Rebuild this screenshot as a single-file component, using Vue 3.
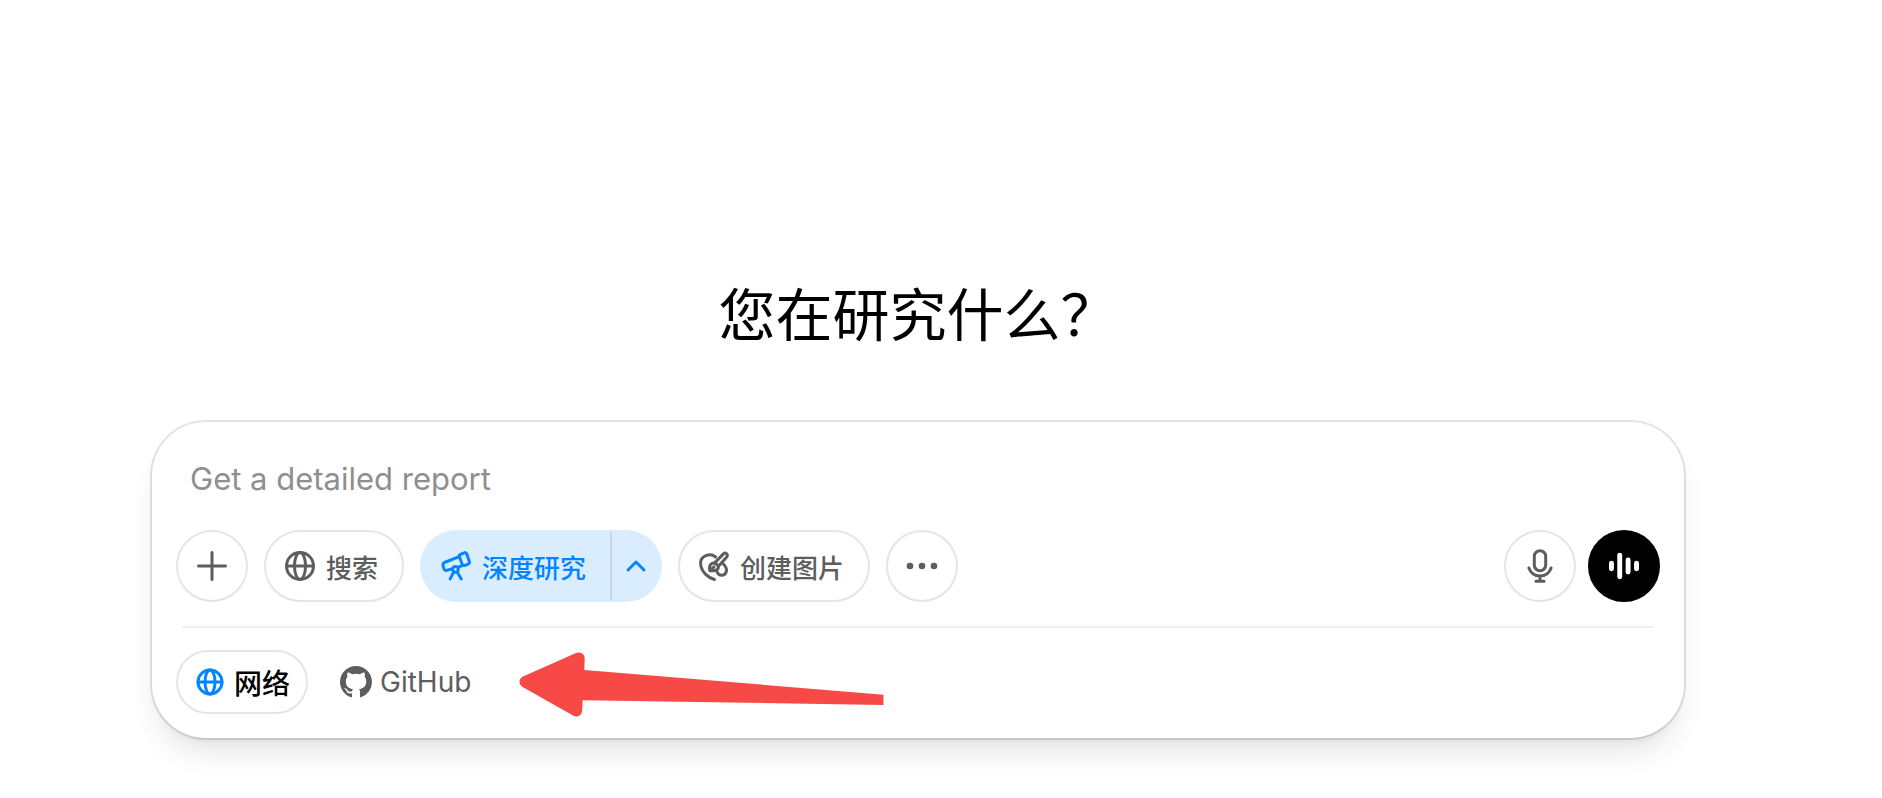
<!-- 深度研究输入框 -->
<template>
  <main class="research">
    <h1 class="title">您在研究什么？</h1>

    <form class="composer" @submit.prevent>
      <input
        v-model="prompt"
        type="text"
        class="prompt"
        placeholder="Get a detailed report"
        aria-label="Get a detailed report"
      />

      <div class="toolbar">
        <button type="button" class="btn round" aria-label="添加">
          <svg class="icon" viewBox="0 0 24 24">
            <path d="M12 3v18M3 12h18" />
          </svg>
        </button>

        <button type="button" class="btn tool">
          <svg class="icon" viewBox="0 0 24 24">
            <circle cx="12" cy="12" r="9" />
            <ellipse cx="12" cy="12" rx="3.7" ry="9" />
            <path d="M3 12h18" />
          </svg>
          <span>搜索</span>
        </button>

        <div class="split">
          <button type="button" class="split-main">
            <svg class="icon" viewBox="0 0 24 24">
              <path
                d="M14.6 4.4l2.8-1.2a1.3 1.3 0 0 1 1.8.8l1.7 5.1a1.3 1.3 0 0 1-.8 1.7l-2.3.8a1.3 1.3 0 0 1-1.7-.8l-1.8-4.9a1.2 1.2 0 0 1 .3-1.5z"
              />
              <path d="M14.2 5.8L4.6 9.5a2 2 0 0 0-1.2 2.600l.5 1.500a2 2 0 0 0 2.500 1.200l3.200-1.100M13.500 12.700l2.700-.9" />
              <circle cx="11.6" cy="14.3" r="1.9" />
              <path d="M10.4 16.1l-2.300 4.500M12.900 16.100l2.600 4.500" />
            </svg>
            <span>深度研究</span>
          </button>
          <button type="button" class="split-more" aria-label="展开来源" @click="showSources = !showSources">
            <svg class="icon-small" viewBox="0 0 24 24">
              <path d="M4 16l8-8 8 8" />
            </svg>
          </button>
        </div>

        <button type="button" class="btn tool">
          <svg class="icon" viewBox="0 0 24 24">
            <path d="M13.1 6C11.4 4.6 9 4.2 6.6 5.1 3.7 6.2 2.5 8.800 3.300 12.200c.9 4 4.500 7.500 9 8.800" />
            <path d="M18.1 10.5c1.9 1.800 2.800 4 1.800 6-1.200 2.400-4.600 2-5.700-.3" />
            <path d="M12.3 10.1l6-6.200a1.500 1.500 0 0 1 2.200 2.100l-5.700 6.400" />
            <path d="M9.2 15.2c-.3-1.500-.3-4.200 1.600-5 1.900-.7 4.200.8 4.100 2.800-.2 2.100-3.700 2.300-5.700 2.200zM9.400 15l2.600-2.500" />
          </svg>
          <span>创建图片</span>
        </button>

        <button type="button" class="btn round" aria-label="更多">
          <svg class="icon solid" viewBox="0 0 24 24">
            <circle cx="4" cy="12" r="2.2" />
            <circle cx="12" cy="12" r="2.2" />
            <circle cx="20" cy="12" r="2.2" />
          </svg>
        </button>

        <div class="voice">
          <button type="button" class="btn round" aria-label="听写">
            <svg class="icon" viewBox="0 0 24 24">
              <rect x="8.2" y="1.8" width="7.6" height="13.4" rx="3.8" />
              <path d="M4.6 13.3c1.200 3.400 4.100 5.300 7.400 5.300s6.200-1.900 7.400-5.300M12 18.600v3.400M9.300 22.100h5.400" />
            </svg>
          </button>
          <button type="button" class="btn round dark" aria-label="语音">
            <svg class="icon solid" viewBox="0 0 24 24">
              <rect x="2" y="8.5" width="3.3" height="7" rx="1.65" />
              <rect x="7.5" y="3.2" width="3.3" height="17.6" rx="1.65" />
              <rect x="13.1" y="6.4" width="3.3" height="11.2" rx="1.65" />
              <rect x="18.7" y="8.5" width="3.3" height="7" rx="1.65" />
            </svg>
          </button>
        </div>
      </div>

      <div v-if="showSources" class="sources">
        <button
          v-for="s in sources"
          :key="s.id"
          type="button"
          class="source"
          :class="{ active: s.id === current }"
          @click="current = s.id"
        >
          <svg v-if="s.id === 'web'" class="icon-web" viewBox="0 0 28 28">
            <circle cx="14" cy="14" r="12" />
            <ellipse cx="14" cy="14" rx="5" ry="12" />
            <path d="M2 14h24" />
          </svg>
          <svg v-else class="icon-github" viewBox="0 0 16 16">
            <path
              d="M8 0C3.58 0 0 3.58 0 8c0 3.54 2.29 6.53 5.47 7.59.4.07.55-.17.55-.38 0-.19-.01-.82-.01-1.49-2.01.37-2.53-.49-2.69-.94-.09-.23-.48-.94-.82-1.13-.28-.15-.68-.52-.01-.53.63-.01 1.08.58 1.23.82.72 1.21 1.87.87 2.33.66.07-.52.28-.87.51-1.07-1.78-.2-3.64-.89-3.64-3.95 0-.87.31-1.59.82-2.15-.08-.2-.36-1.02.08-2.12 0 0 .67-.21 2.2.82.64-.18 1.32-.27 2-.27s1.36.09 2 .27c1.53-1.04 2.2-.82 2.2-.82.44 1.1.16 1.92.08 2.12.51.56.82 1.27.82 2.15 0 3.07-1.87 3.75-3.65 3.95.29.25.54.73.54 1.48 0 1.07-.01 1.93-.01 2.2 0 .21.15.46.55.38A8.01 8.01 0 0 0 16 8c0-4.42-3.58-8-8-8z"
            />
          </svg>
          <span>{{ s.name }}</span>
        </button>

        <!-- 指向来源的箭头 -->
        <svg class="arrow" viewBox="0 0 364 64" aria-hidden="true">
          <path
            d="M4 26.600L57 3.100C61.500 1.400 65.800 4 65.700 9L65.300 20 364.500 44.700V55L63.700 50.200 63.100 60.500C62.900 66 58 67.800 54 65.500L4 37.300C-.700 34.500-.700 29 4 26.600z"
          />
        </svg>
      </div>
    </form>
  </main>
</template>

<script setup>
import { ref } from 'vue'

// 输入内容
const prompt = ref('')

// 来源栏是否展开
const showSources = ref(true)

// 可选来源
const sources = [
  { id: 'web', name: '网络' },
  { id: 'github', name: 'GitHub' },
]

const current = ref('web')
</script>

<style>
body {
  background: #fff;
}
</style>

<style scoped>
.research {
  padding: 280px 198px 60px 152px;
  font-family: Inter, 'Noto Sans CJK SC', sans-serif;
  color: #5d5d5d;
}

.title {
  margin: 0 0 70px;
  font-size: 57px;
  line-height: 72px;
  font-weight: 400;
  text-align: center;
  color: #000;
}

.composer {
  display: flex;
  flex-direction: column;
  padding: 24px;
  border-radius: 54px;
  background: #fff;
  box-shadow:
    0 0 0 2px rgba(0, 0, 0, 0.11),
    0 20px 30px -6px rgba(0, 0, 0, 0.1),
    0 8px 12px -8px rgba(0, 0, 0, 0.1);
}

.prompt {
  height: 64px;
  margin-bottom: 20px;
  padding: 0 14px;
  border: none;
  outline: none;
  background: none;
  font-family: inherit;
  font-size: 31px;
  color: #0d0d0d;
}

.prompt::placeholder {
  color: #8f8f8f;
  opacity: 1;
}

button {
  font-family: inherit;
  color: inherit;
  cursor: pointer;
}

svg {
  flex: none;
  fill: none;
  stroke: currentColor;
  stroke-width: 2;
  stroke-linecap: round;
  stroke-linejoin: round;
}

.toolbar {
  display: flex;
  gap: 16px;
}

.btn {
  display: flex;
  align-items: center;
  justify-content: center;
  box-sizing: border-box;
  height: 72px;
  border: 2px solid #e5e5e5;
  border-radius: 36px;
  background: #fff;
}

.round {
  width: 72px;
  padding: 0;
}

.tool {
  gap: 8px;
  padding: 0 24px 0 16px;
  font-size: 26px;
  font-weight: 500;
}

.dark {
  border-color: #000;
  background: #000;
  color: #fff;
}

.icon {
  width: 36px;
  height: 36px;
}

.solid {
  fill: currentColor;
  stroke: none;
}

.split {
  display: flex;
  align-items: center;
  height: 72px;
  border-radius: 36px;
  background: #daedff;
  color: #0285ff;
}

.split button {
  display: flex;
  align-items: center;
  height: 68px;
  border: none;
  background: none;
}

.split .split-main {
  gap: 8px;
  padding: 0 24px 0 18px;
  border-right: 2px solid #c4d5e6;
  font-size: 26px;
  font-weight: 500;
}

.split .split-more {
  padding: 0 14px 0 12px;
}

.icon-small {
  width: 24px;
  height: 24px;
  stroke-width: 3;
}

.voice {
  display: flex;
  gap: 12px;
  margin-left: auto;
}

.sources {
  display: flex;
  gap: 16px;
  position: relative;
  margin-top: 24px;
  padding-top: 24px;
}

.sources::before {
  content: '';
  position: absolute;
  top: 0;
  left: 6px;
  right: 6px;
  height: 2px;
  background: #f0f0f0;
}

.source {
  display: flex;
  align-items: center;
  gap: 8px;
  box-sizing: border-box;
  height: 64px;
  padding: 0 14px;
  border: 2px solid transparent;
  border-radius: 32px;
  background: #fff;
  font-size: 28px;
}

.source.active {
  gap: 10px;
  padding: 0 16px 0 18px;
  border-color: #e5e5e5;
  font-weight: 500;
  color: #000;
}

.icon-web {
  width: 28px;
  height: 28px;
  stroke-width: 3;
  color: #0285ff;
}

.icon-github {
  width: 32px;
  height: 32px;
  fill: currentColor;
  stroke: none;
}

.arrow {
  width: 364px;
  height: 64px;
  margin-left: 16px;
  overflow: visible;
  fill: #f74a47;
  stroke: none;
}
</style>
